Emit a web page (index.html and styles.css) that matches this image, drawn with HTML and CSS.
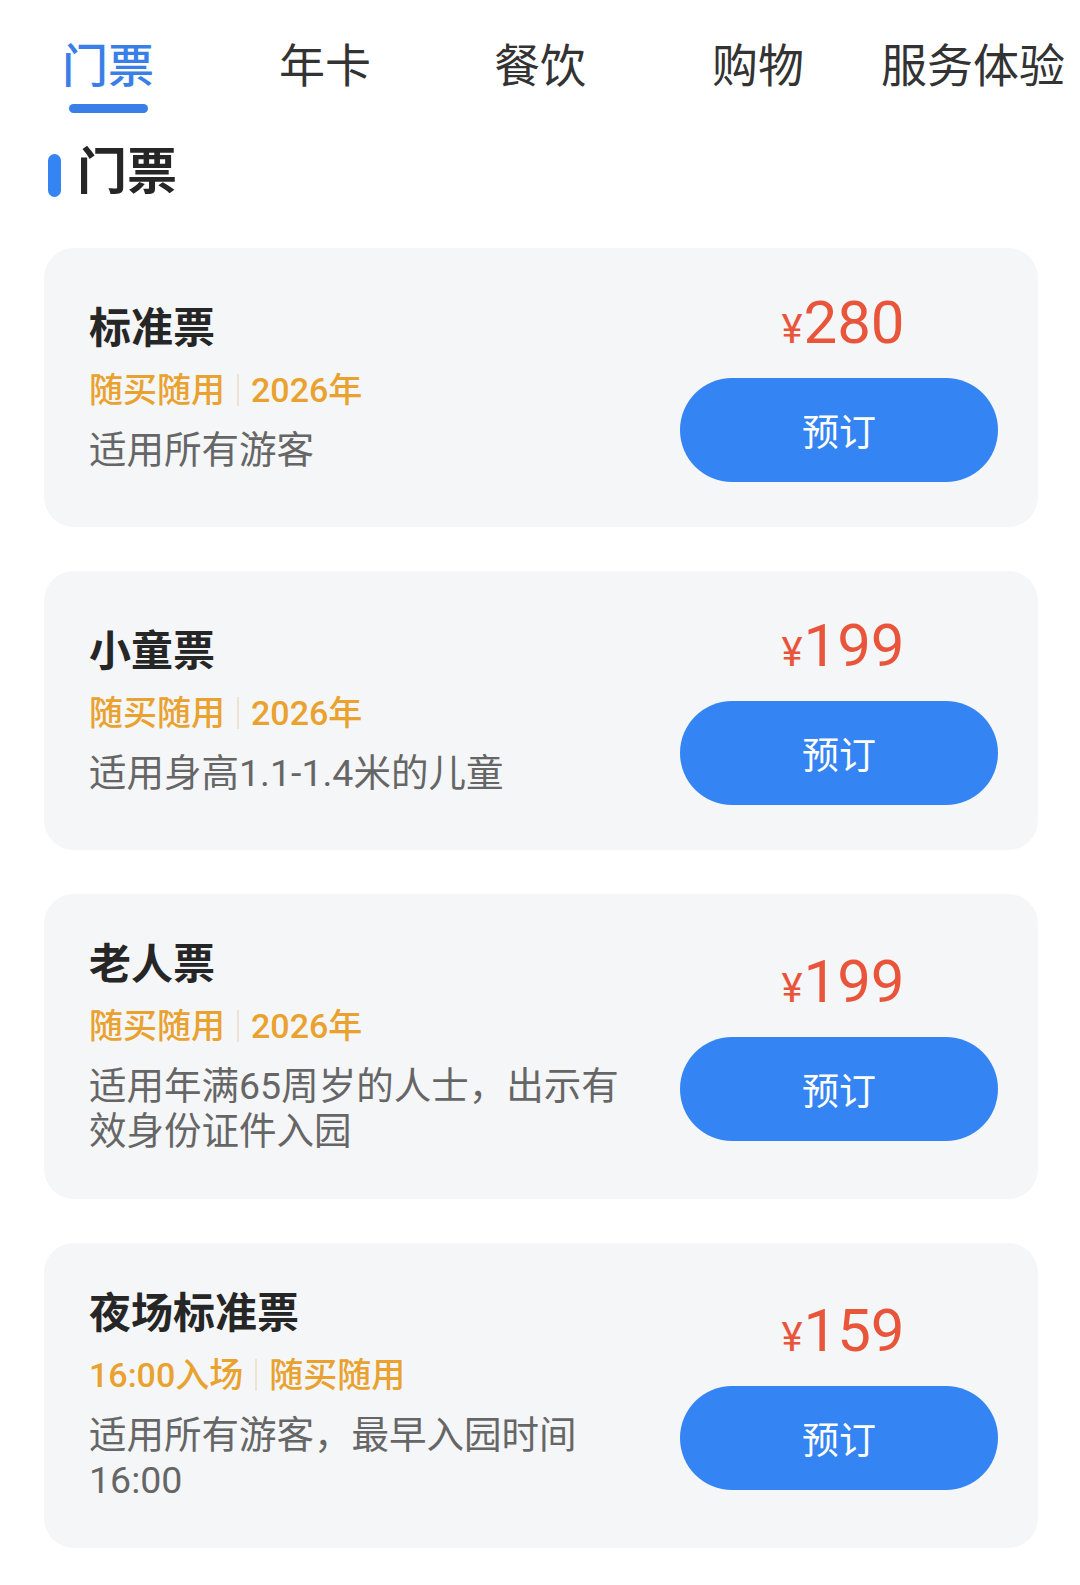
FILE: index.html
```html
<!DOCTYPE html>
<html lang="zh-CN">
<head>
<meta charset="utf-8">
<title>门票</title>
<link rel="stylesheet" href="styles.css">
</head>
<body>
<nav class="tabs">
  <div class="tab tab-active"><span class="tab-label">门票</span><span class="tab-bar"></span></div>
  <div class="tab"><span class="tab-label">年卡</span></div>
  <div class="tab"><span class="tab-label">餐饮</span></div>
  <div class="tab"><span class="tab-label">购物</span></div>
  <div class="tab"><span class="tab-label">服务体验</span></div>
</nav>

<h2 class="section-title"><span class="section-mark"></span>门票</h2>

<main class="list">
  <section class="card">
    <div class="info">
      <div class="name">标准票</div>
      <div class="tags"><span>随买随用</span><i class="sep"></i><span>2026年</span></div>
      <div class="desc">适用所有游客</div>
    </div>
    <div class="action">
      <div class="price"><span class="yen">¥</span>280</div>
      <button class="book">预订</button>
    </div>
  </section>

  <section class="card">
    <div class="info">
      <div class="name">小童票</div>
      <div class="tags"><span>随买随用</span><i class="sep"></i><span>2026年</span></div>
      <div class="desc">适用身高1.1-1.4米的儿童</div>
    </div>
    <div class="action">
      <div class="price"><span class="yen">¥</span>199</div>
      <button class="book">预订</button>
    </div>
  </section>

  <section class="card">
    <div class="info">
      <div class="name">老人票</div>
      <div class="tags"><span>随买随用</span><i class="sep"></i><span>2026年</span></div>
      <div class="desc">适用年满65周岁的人士，出示有效身份证件入园</div>
    </div>
    <div class="action">
      <div class="price"><span class="yen">¥</span>199</div>
      <button class="book">预订</button>
    </div>
  </section>

  <section class="card">
    <div class="info">
      <div class="name">夜场标准票</div>
      <div class="tags"><span>16:00入场</span><i class="sep"></i><span>随买随用</span></div>
      <div class="desc">适用所有游客，最早入园时间 16:00</div>
    </div>
    <div class="action">
      <div class="price"><span class="yen">¥</span>159</div>
      <button class="book">预订</button>
    </div>
  </section>
</main>
</body>
</html>
```

FILE: styles.css
```css
html, body {
  margin: 0;
  padding: 0;
  background: #ffffff;
}

body {
  font-family: Roboto, "Noto Sans CJK SC", sans-serif;
  color: #222222;
  width: 1080px;
}

.tabs {
  display: grid;
  grid-template-columns: 216px 218px 212px 224px 206px;
  padding-top: 36px;
  height: 113px;
  box-sizing: border-box;
}

.tab {
  display: flex;
  flex-direction: column;
  align-items: center;
}

.tab-label {
  font-size: 46px;
  line-height: 60px;
  color: #333333;
  font-weight: 400;
  white-space: nowrap;
}

.tab-active .tab-label {
  color: #3a7fe8;
  font-weight: 500;
}

.tab-bar {
  display: block;
  width: 79px;
  height: 9px;
  margin-top: 8px;
  border-radius: 5px;
  background: #3a7fe8;
}

.section-title {
  display: flex;
  align-items: center;
  margin: 29px 0 0 48px;
  font-size: 50px;
  line-height: 60px;
  font-weight: 700;
  color: #262626;
}

.section-mark {
  display: block;
  width: 13px;
  height: 43px;
  margin-top: 6px;
  margin-right: 16px;
  border-radius: 7px;
  background: #3584f4;
}

.list {
  display: flex;
  flex-direction: column;
  gap: 44px;
  padding: 46px 42px 40px 44px;
}

.card {
  display: flex;
  align-items: center;
  justify-content: space-between;
  padding: 45px 40px 45px 45px;
  border-radius: 30px;
  background: #f5f6f8;
}

.info {
  width: 534px;
}

.name {
  font-size: 42px;
  line-height: 52px;
  font-weight: 700;
  color: #262626;
  margin-bottom: 13px;
}

.tags {
  display: flex;
  align-items: center;
  font-size: 34px;
  line-height: 44px;
  font-weight: 500;
  color: #e9a22f;
  margin-bottom: 16px;
}

.sep {
  display: block;
  width: 2px;
  height: 32px;
  margin: 0 12px;
  background: #ece3d3;
}

.desc {
  font-size: 37.5px;
  line-height: 45px;
  color: #666666;
}

.action {
  width: 318px;
  display: flex;
  flex-direction: column;
  align-items: center;
}

.price {
  height: 60px;
  font-size: 60px;
  line-height: 60px;
  color: #e8553a;
  padding-left: 8px;
}

.yen {
  font-size: 40px;
  line-height: 1;
  margin-right: 1px;
}

.book {
  margin-top: 25px;
  width: 318px;
  height: 104px;
  border: none;
  border-radius: 52px;
  background: #3584f4;
  color: #ffffff;
  font-family: "Noto Sans CJK SC", sans-serif;
  font-size: 37px;
  padding: 0;
  cursor: pointer;
}
```
